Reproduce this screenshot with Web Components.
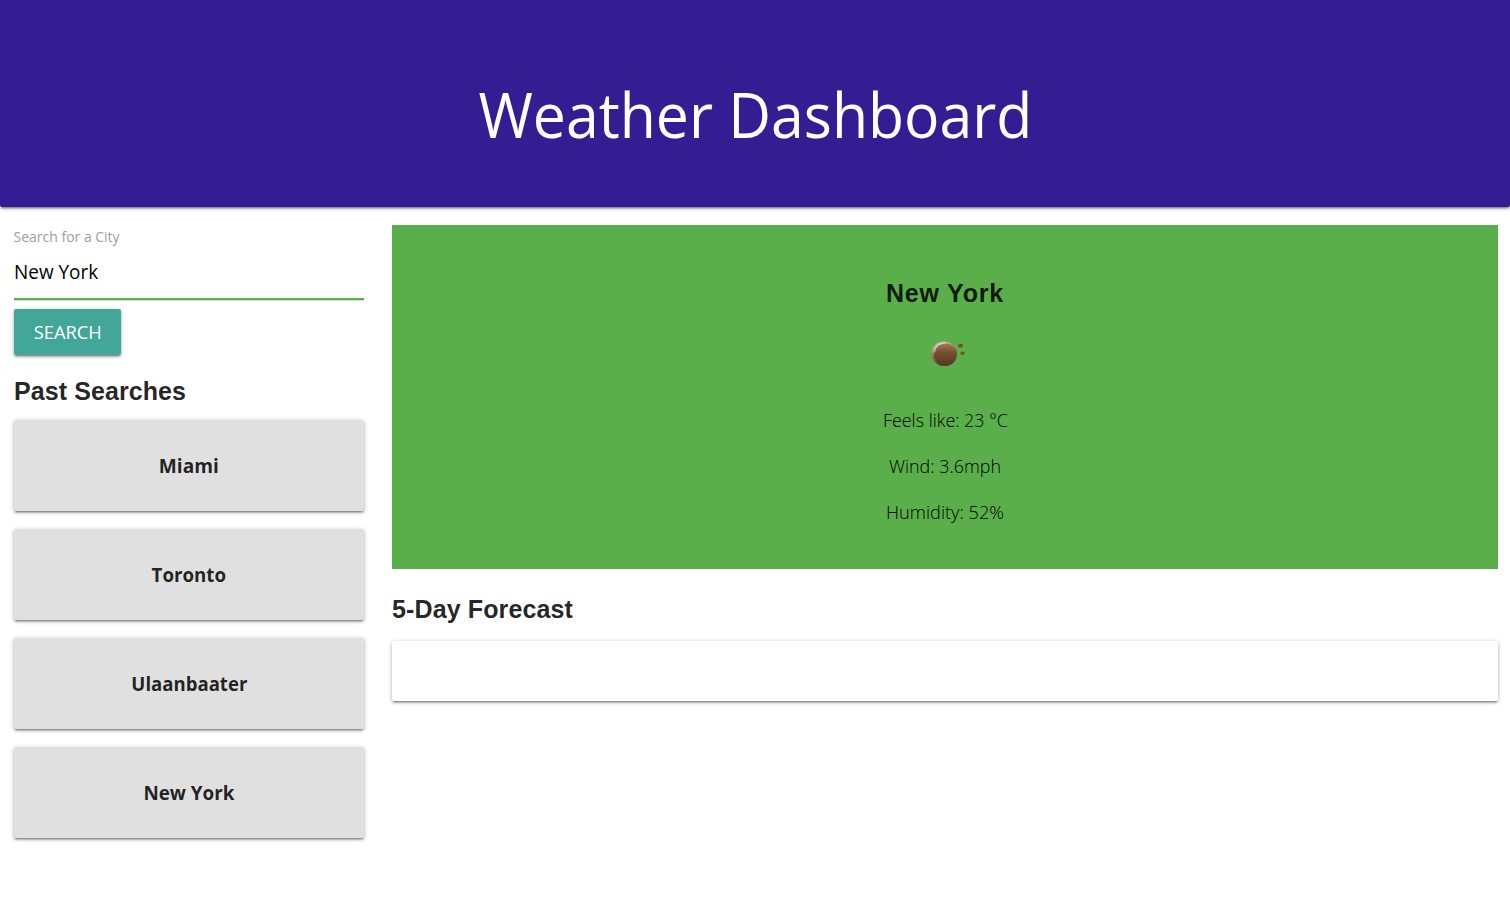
<!DOCTYPE html>
<html lang="en">
<head>
<meta charset="utf-8">
<title>Weather Dashboard</title>
<style>
body { margin: 0; background: #fff; color: rgba(0,0,0,.87); font-family: "Open Sans", "Noto Sans", sans-serif; }
</style>
</head>
<body>
<weather-app></weather-app>
<script>
const shadowCss = '0 2px 2px 0 rgba(0,0,0,.2), 0 3px 1px -2px rgba(0,0,0,.18), 0 1px 5px 0 rgba(0,0,0,.24)';
function define(name, html, setup) {
  const template = document.createElement('template');
  template.innerHTML = html;
  customElements.define(name, class extends HTMLElement {
    constructor() {
      super();
      this.attachShadow({ mode: 'open' }).append(template.content.cloneNode(true));
    }
    connectedCallback() { if (setup) setup(this); }
  });
}

/* A single line of text set to a given width: mode "track" spaces the letters, otherwise they are condensed. */
define('fit-text', `<style>
:host { display: inline-flex; white-space: nowrap; justify-content: center; }
span { display: block; flex: none; }
</style><span><slot></slot></span>`, el => {
  const span = el.shadowRoot.querySelector('span');
  const target = +el.getAttribute('width');
  el.style.width = target + 'px';
  const natural = span.getBoundingClientRect().width;
  if (el.getAttribute('mode') === 'track') {
    const gap = (target - natural) / el.textContent.length;
    span.style.letterSpacing = gap + 'px';
  } else {
    span.style.transform = 'scaleX(' + target / natural + ')';
  }
});

define('page-banner', `<style>
:host { display: flex; justify-content: center; height: 207px; box-sizing: border-box; padding-top: 69px; background: #321d92; color: #fff; border-radius: 0 0 2px 2px; box-shadow: ${shadowCss}; }
h1 { margin: 0; font-size: 62px; line-height: 90px; font-weight: 400; }
</style><h1><slot></slot></h1>`);

define('section-title', `<style>
:host { display: block; }
h2 { margin: 0; font: 700 25px/30px "Liberation Sans", Arial, sans-serif; }
</style><h2><slot></slot></h2>`);

define('search-form', `<style>
:host { display: flex; flex-direction: column; align-items: flex-start; }
label { color: #9e9e9e; font-size: 14.4px; line-height: 22px; height: 24px; }
.field { width: 100%; height: 50px; box-sizing: border-box; border-bottom: 2px solid #5baf4a; box-shadow: 0 1px 0 0 #cde7c8; font-size: 19.4px; line-height: 44px; color: #000; margin-bottom: 9px; }
button { width: 107px; height: 46px; border: 0; border-radius: 2px; padding: 0; background: #42a699; color: #fff; font: 400 18.2px/46px "Open Sans", sans-serif; box-shadow: ${shadowCss}; }
</style>
<label><fit-text width="106">Search for a City</fit-text></label>
<div class="field"><fit-text width="84">New York</fit-text></div>
<button><fit-text width="68">SEARCH</fit-text></button>`);

define('city-card', `<style>
:host { display: flex; align-items: center; justify-content: center; height: 91px; background: #e0e0e0; border-radius: 2px; font-weight: 700; font-size: 19px; line-height: 28px; box-shadow: ${shadowCss}; }
</style><slot></slot>`);

define('weather-icon', `<style>
:host { display: block; width: 50px; height: 50px; }
svg { display: block; }
</style><svg width="50" height="50" viewBox="0 0 50 50">
<defs><linearGradient id="b" x1="0" y1="0" x2="0" y2="1"><stop offset="0" stop-color="#a5795a"/><stop offset=".4" stop-color="#75502f"/><stop offset="1" stop-color="#543925"/></linearGradient>
<linearGradient id="r" x1=".25" y1="0" x2=".6" y2="1"><stop offset="0" stop-color="#e0cbbd"/><stop offset=".4" stop-color="#a57a5c"/><stop offset="1" stop-color="#563923"/></linearGradient></defs>
<ellipse cx="24.2" cy="25.8" rx="12.9" ry="12.3" fill="url(#r)"/>
<ellipse cx="25.4" cy="26.6" rx="11.4" ry="11" fill="url(#b)"/>
<path d="M14.6 24C15.2 19 19 15.6 25 15.2" fill="none" stroke="#eee0d8" stroke-width="1.2" stroke-linecap="round" opacity=".6"/>
<rect x="38.3" y="16" width="4.3" height="3.4" rx=".4" fill="#75502f"/><rect x="40.6" y="23.8" width="3.8" height="3" rx=".4" fill="#75502f"/>
</svg>`);

define('current-weather', `<style>
:host { display: flex; flex-direction: column; align-items: center; height: 344px; box-sizing: border-box; padding-top: 53px; background: #5baf4a; }
weather-icon { margin: 20px 0 19px; }
p { margin: 0; font-size: 17.6px; line-height: 46px; font-weight: 300; color: #000; }
</style>
<section-title><fit-text mode="track" width="118">New York</fit-text></section-title>
<weather-icon></weather-icon>
<p><fit-text width="125">Feels like: 23 °C</fit-text></p>
<p><fit-text width="112">Wind: 3.6mph</fit-text></p>
<p><fit-text width="118">Humidity: 52%</fit-text></p>`);

define('forecast-panel', `<style>
:host { display: block; height: 60px; background: #fff; border-radius: 2px; box-shadow: ${shadowCss}; }
</style><slot></slot>`);

define('weather-app', `<style>
:host { display: block; min-height: 904px; }
main { display: grid; grid-template-columns: 350px 1106px; column-gap: 28px; padding: 18px 12px 40px 14px; }
search-form { padding-top: 1px; }
.past { margin: 21px 0 14px; }
.cities { display: grid; gap: 18px; }
.forecast { margin: 25px 0 17px; }
</style>
<page-banner><fit-text width="554">Weather Dashboard</fit-text></page-banner>
<main>
<aside>
<search-form></search-form>
<section-title class="past"><fit-text mode="track" width="172">Past Searches</fit-text></section-title>
<div class="cities">
<city-card><fit-text width="60">Miami</fit-text></city-card>
<city-card><fit-text width="74.5">Toronto</fit-text></city-card>
<city-card><fit-text width="116">Ulaanbaater</fit-text></city-card>
<city-card><fit-text width="91">New York</fit-text></city-card>
</div>
</aside>
<section>
<current-weather></current-weather>
<section-title class="forecast"><fit-text mode="track" width="181">5-Day Forecast</fit-text></section-title>
<forecast-panel></forecast-panel>
</section>
</main>`);
</script>
</body>
</html>
